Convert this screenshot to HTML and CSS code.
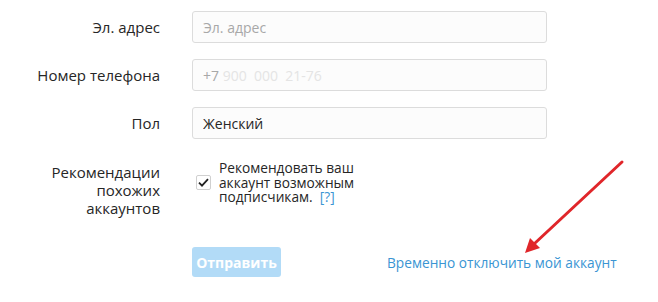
FILE: index.html
```html
<!DOCTYPE html>
<html lang="ru">
<head>
    <meta charset="UTF-8">
    <title>Редактировать профиль</title>
    <link rel="stylesheet" href="styles.css">
</head>
<body>
    <div class="page">
        <form class="profile-form">
            <label class="field-label" for="email">Эл. адрес</label>
            <input class="field-input" type="email" id="email" placeholder="Эл. адрес">

            <label class="field-label" for="phone">Номер телефона</label>
            <div class="field-input fake-input"><span class="muted">+7&nbsp;</span><span class="blurred">900 &nbsp;000 &nbsp;21-76</span></div>

            <label class="field-label" for="gender">Пол</label>
            <input class="field-input" type="text" id="gender" value="Женский">

            <div class="field-label multi">Рекомендации похожих аккаунтов</div>
            <div class="check-row">
                <span class="check-box">
                    <svg width="11" height="9" viewBox="0 0 11 9"><path d="M1 4.6 L4 7.6 L10 1.2" fill="none" stroke="#222" stroke-width="1.8"/></svg>
                </span>
                <p class="check-text">Рекомендовать ваш аккаунт возможным подписчикам.&nbsp; <a href="#" class="help">[?]</a></p>
            </div>

            <div></div>
            <div class="actions">
                <button type="button" class="btn" disabled>Отправить</button>
                <a href="#" class="disable-link">Временно отключить мой аккаунт</a>
            </div>
        </form>

        <!-- annotation arrow -->
        <svg class="arrow" width="658" height="302" viewBox="0 0 658 302">
            <line x1="622" y1="162" x2="534" y2="244" stroke="#e0262a" stroke-width="3" stroke-linecap="round"/>
            <polygon points="525,253 530,238 540,248" fill="#e0262a"/>
        </svg>
    </div>
</body>
</html>
```

FILE: styles.css
```css
* {
    margin: 0;
    padding: 0;
    box-sizing: border-box;
}

body {
    font-family: 'Open Sans', 'Segoe UI', sans-serif;
    background: #fff;
    color: #262626;
}

.page {
    position: relative;
    width: 658px;
    height: 302px;
}

.profile-form {
    display: grid;
    grid-template-columns: 160px 355px;
    column-gap: 32px;
    row-gap: 16px;
    padding-top: 11px;
    align-items: center;
}

.field-label {
    text-align: right;
    font-size: 15px;
    color: #262626;
}

.field-label.multi {
    align-self: start;
    margin-top: 8px;
    line-height: 18px;
    padding-left: 40px;
}

.field-input {
    height: 32px;
    border: 1px solid #dcdcdc;
    border-radius: 3px;
    background: #fcfcfc;
    padding: 0 10px;
    font-family: inherit;
    font-size: 14px;
    color: #262626;
    outline: none;
}

.field-input::placeholder {
    color: #a8a8a8;
}

.fake-input {
    display: flex;
    align-items: center;
    white-space: pre;
}

.muted {
    color: #a8a8a8;
}

.blurred {
    color: #e4e4e4;
}

.check-row {
    display: flex;
    align-items: center;
    gap: 8px;
    margin-top: 6px;
    align-self: start;
    padding-left: 4px;
}

.check-box {
    width: 15px;
    height: 15px;
    border: 1px solid #d0d0d0;
    border-radius: 2px;
    display: flex;
    align-items: center;
    justify-content: center;
    flex-shrink: 0;
}

.check-text {
    font-size: 13.7px;
    line-height: 14.5px;
    width: 150px;
    color: #262626;
}

.help {
    color: #3a95d3;
    text-decoration: none;
}

.actions {
    display: flex;
    align-items: center;
    gap: 106px;
    margin-top: 14px;
}

.btn {
    flex-shrink: 0;
    width: 89px;
    height: 30px;
    border: none;
    border-radius: 3px;
    background: #b2dbf7;
    color: #fff;
    font-family: inherit;
    font-size: 14px;
    font-weight: 700;
}

.disable-link {
    color: #3a95d3;
    font-size: 13.7px;
    text-decoration: none;
    white-space: nowrap;
}

.arrow {
    position: absolute;
    left: 0;
    top: 0;
    pointer-events: none;
}
```
